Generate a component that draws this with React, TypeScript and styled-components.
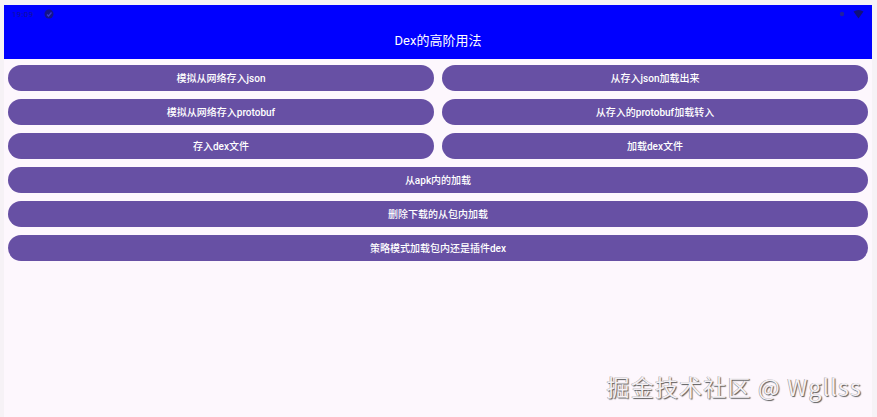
import React from 'react';
import styled, { createGlobalStyle } from 'styled-components';

const GlobalStyle = createGlobalStyle`
  html, body {
    margin: 0;
    padding: 0;
    background: #f6f2f6;
  }
  body {
    font-family: "Roboto", "Noto Sans CJK SC", sans-serif;
  }
`;

const Screen = styled.div`
  position: relative;
  margin: 5px 5px 0 4px;
  height: 412px;
  background: #fdf7fd;
  display: flex;
  flex-direction: column;
  overflow: hidden;
`;

const Header = styled.div`
  height: 54px;
  background: #0000ff;
  display: flex;
  flex-direction: column;
`;

const StatusBar = styled.div`
  height: 18px;
  display: flex;
  align-items: center;
  padding: 0 8px 0 8px;
  color: #12129a;
  font-size: 8px;
`;

const StatusTime = styled.span`
  letter-spacing: 0.3px;
`;

const StatusSpacer = styled.div`
  flex: 1;
`;

const Title = styled.div`
  flex: 1;
  display: flex;
  align-items: center;
  justify-content: center;
  color: #ffffff;
  font-size: 13px;
  padding-bottom: 3px;
`;

const ButtonGrid = styled.div`
  display: grid;
  grid-template-columns: 1fr 1fr;
  gap: 8px;
  padding: 6px 4px;
`;

const ActionButton = styled.button<{ $wide?: boolean }>`
  grid-column: ${({ $wide }) => ($wide ? '1 / span 2' : 'auto')};
  height: 26px;
  border: none;
  border-radius: 13px;
  background: #6750a4;
  color: #ffffff;
  font-family: "Roboto", "Noto Sans CJK SC", sans-serif;
  font-size: 10px;
  font-weight: 500;
  padding: 0 0 2px;
  cursor: pointer;
`;

const Watermark = styled.div`
  position: absolute;
  right: 10px;
  bottom: 17px;
  font-family: "Noto Sans CJK SC", sans-serif;
  font-size: 23px;
  line-height: 27px;
  letter-spacing: 1.2px;
  color: #f4f0f4;
  text-shadow: 1px 1px 1px #5a5a5a, -0.5px -0.5px 0 #9a9a9a;
`;

const buttons: { label: string; wide?: boolean }[] = [
  { label: '模拟从网络存入json' },
  { label: '从存入json加载出来' },
  { label: '模拟从网络存入protobuf' },
  { label: '从存入的protobuf加载转入' },
  { label: '存入dex文件' },
  { label: '加载dex文件' },
  { label: '从apk内的加载', wide: true },
  { label: '删除下载的从包内加载', wide: true },
  { label: '策略模式加载包内还是插件dex', wide: true },
];

export default function App() {
  return (
    <>
      <GlobalStyle />
      <Screen>
        <Header>
          <StatusBar>
            <StatusTime>19:09</StatusTime>
            <svg width="12" height="12" viewBox="0 0 12 12" style={{ marginLeft: 10 }}>
              <circle cx="6" cy="6" r="4.5" fill="#14148a" />
              <path d="M4 6.5 L5.5 8 L8.5 4.5" stroke="#3a3ad0" strokeWidth="1.2" fill="none" />
            </svg>
            <StatusSpacer />
            <svg width="6" height="6" viewBox="0 0 6 6" style={{ marginRight: 8 }}>
              <circle cx="3" cy="3" r="2.2" fill="#2020a0" />
            </svg>
            <svg width="11" height="9" viewBox="0 0 11 9">
              <path d="M0.5 1.5 Q5.5 -1.5 10.5 1.5 L5.5 8.5 Z" fill="#10107a" />
            </svg>
          </StatusBar>
          <Title>Dex的高阶用法</Title>
        </Header>
        <ButtonGrid>
          {buttons.map((b) => (
            <ActionButton key={b.label} $wide={b.wide}>
              {b.label}
            </ActionButton>
          ))}
        </ButtonGrid>
        <Watermark>掘金技术社区 @ Wgllss</Watermark>
      </Screen>
    </>
  );
}
